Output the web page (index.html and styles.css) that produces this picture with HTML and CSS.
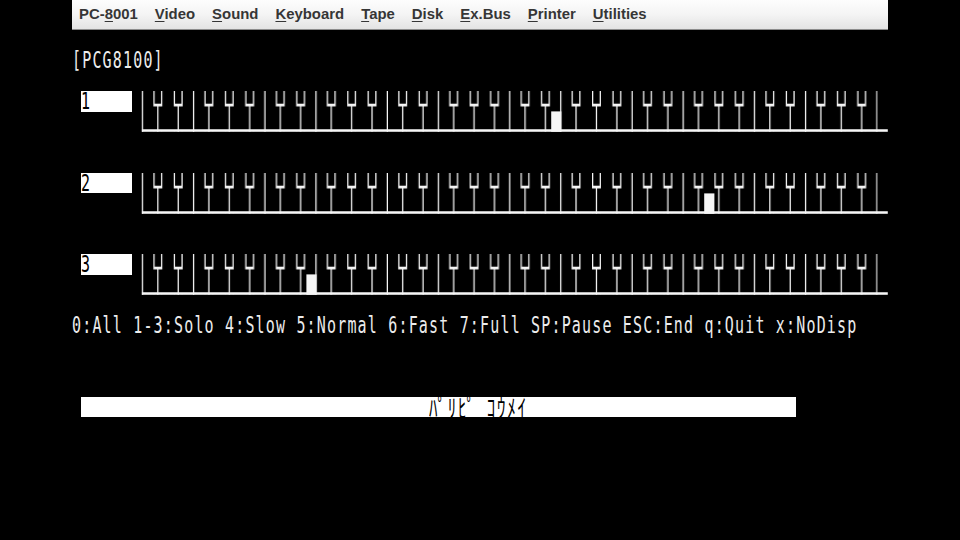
FILE: index.html
```html
<!DOCTYPE html>
<html lang="ja">
<head>
<meta charset="utf-8">
<title>PC-8001</title>
<link rel="stylesheet" href="styles.css">
</head>
<body>
<div class="app">
  <nav class="menubar">
    <span class="menu">PC-<u>8</u>001</span>
    <span class="menu"><u>V</u>ideo</span>
    <span class="menu"><u>S</u>ound</span>
    <span class="menu"><u>K</u>eyboard</span>
    <span class="menu"><u>T</u>ape</span>
    <span class="menu"><u>D</u>isk</span>
    <span class="menu"><u>E</u>x.Bus</span>
    <span class="menu"><u>P</u>rinter</span>
    <span class="menu"><u>U</u>tilities</span>
  </nav>
  <main class="screen">
    <div class="title"><span class="txt">[PCG8100]</span></div>

    <div class="track t1">
      <div class="label"><span class="txt">1</span></div>
      <svg class="kb" viewBox="0 0 592 16" preserveAspectRatio="none">
        <defs>
          <path id="bk" d="M0 0h1v5h5v-5h1v6h-3v10h-1v-10h-3z"/>
          <pattern id="oct" patternUnits="userSpaceOnUse" x="8" y="0" width="96" height="16">
            <rect x="39" y="0" width="1" height="16"/>
            <rect x="95" y="0" width="1" height="16"/>
            <use href="#bk" x="8"/>
            <use href="#bk" x="24"/>
            <use href="#bk" x="48"/>
            <use href="#bk" x="64"/>
            <use href="#bk" x="80"/>
          </pattern>
          <g id="keys">
            <rect x="0" y="0" width="584" height="16" fill="url(#oct)"/>
            <rect x="7" y="15" width="585" height="1"/>
          </g>
        </defs>
        <use href="#keys"/>
        <rect x="328" y="8" width="8" height="8"/>
      </svg>
    </div>

    <div class="track t2">
      <div class="label"><span class="txt">2</span></div>
      <svg class="kb" viewBox="0 0 592 16" preserveAspectRatio="none">
        <use href="#keys"/>
        <rect x="448" y="8" width="8" height="8"/>
      </svg>
    </div>

    <div class="track t3">
      <div class="label"><span class="txt">3</span></div>
      <svg class="kb" viewBox="0 0 592 16" preserveAspectRatio="none">
        <use href="#keys"/>
        <rect x="136" y="8" width="8" height="8"/>
      </svg>
    </div>

    <div class="help"><span class="txt">0:All 1-3:Solo 4:Slow 5:Normal 6:Fast 7:Full SP:Pause ESC:End q:Quit x:NoDisp</span></div>

    <div class="bar"><span class="txt kana">ﾊﾟﾘﾋﾟ</span><span class="txt kana gap">ｺｳﾒｲ</span></div>
  </main>
</div>
</body>
</html>
```

FILE: styles.css
```css
* { box-sizing: border-box; }

html, body {
  margin: 0;
  background: #000;
}

.app {
  width: 816px;
  height: 540px;
  margin: 0 auto;
  display: flex;
  flex-direction: column;
}

.menubar {
  flex: none;
  height: 30px;
  display: flex;
  gap: 17px;
  padding: 0 7px;
  background: linear-gradient(to bottom, #fdfdfd 0%, #f4f4f4 50%, #e3e3e3 100%);
  border-bottom: 1px solid #8c8c8c;
  font-family: "Liberation Sans", Arial, sans-serif;
  font-weight: bold;
  font-size: 14.9px;
  line-height: 28px;
  color: #363636;
}

.menu u {
  text-underline-offset: 2px;
}

.screen {
  flex: 1;
  display: grid;
  grid-template-rows: repeat(25, 20.4px);
  grid-template-columns: 816px;
  font-family: "DejaVu Sans Mono", "Noto Sans CJK JP", monospace;
  font-size: 15px;
  letter-spacing: 1.17px;
  line-height: 20.4px;
  color: #ececec;
}

.txt {
  display: inline-block;
  white-space: pre;
  transform: scaleY(1.55);
}

.title { grid-row: 2; }
.help  { grid-row: 15; }

.track {
  display: flex;
  align-items: flex-start;
}
.t1 { grid-row: 4 / span 2; }
.t2 { grid-row: 8 / span 2; }
.t3 { grid-row: 12 / span 2; }

.label {
  width: 51px;
  height: 20.4px;
  margin-left: 9px;
  background: #fff;
  color: #000;
}

.kb {
  display: block;
  width: 754.8px;
  height: 40.8px;
  margin-left: 1.2px;
  fill: #f6f6f6;
}

.bar {
  grid-row: 19;
  width: 715px;
  height: 20.4px;
  margin-left: 9px;
  padding-left: 348px;
  background: #fff;
  color: #000;
}

.kana {
  font-family: "Noto Sans CJK JP", sans-serif;
  font-size: 17px;
  letter-spacing: 1.7px;
  transform: scaleY(1.45);
}

.gap {
  margin-left: 10.2px;
}
```
